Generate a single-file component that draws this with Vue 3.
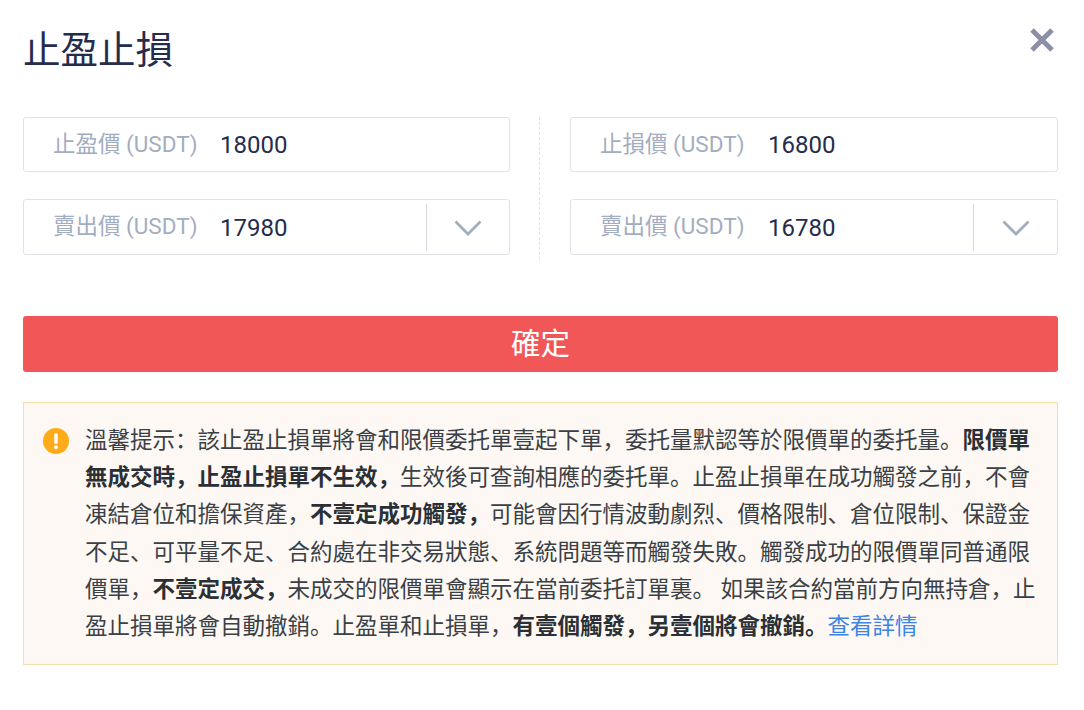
<script setup>
const columns = [
  { top: '止盈價 (USDT)', topValue: '18000', bottom: '賣出價 (USDT)', bottomValue: '17980' },
  { top: '止損價 (USDT)', topValue: '16800', bottom: '賣出價 (USDT)', bottomValue: '16780' }
]
</script>

<template>
  <div class="dialog">
    <header class="head">
      <h1 class="title">止盈止損</h1>
      <svg class="close" width="26" height="26" viewBox="0 0 26 26" aria-hidden="true">
        <path d="M3 3 L23 23 M23 3 L3 23" fill="none" stroke="#8b90a6" stroke-width="5" />
      </svg>
    </header>

    <div class="form">
      <template v-for="(col, i) in columns" :key="i">
        <div v-if="i === 1" class="divider"></div>
        <div class="col">
          <div class="field first">
            <span class="label">{{ col.top }}</span>
            <span class="value">{{ col.topValue }}</span>
          </div>
          <div class="field second">
            <span class="label">{{ col.bottom }}</span>
            <span class="value">{{ col.bottomValue }}</span>
            <span class="select">
              <svg width="28" height="18" viewBox="0 0 28 18" aria-hidden="true">
                <path d="M1.5 2.5 L14 15 L26.500 2.500" fill="none" stroke="#a3adc0" stroke-width="2.800" />
              </svg>
            </span>
          </div>
        </div>
      </template>
    </div>

    <button class="confirm" type="button">確定</button>

    <div class="notice">
      <svg class="warn" width="26" height="26" viewBox="0 0 26 26" aria-hidden="true">
        <circle cx="13" cy="13" r="13" fill="#fdab19" />
        <rect x="11.300" y="5.500" width="3.400" height="10.500" rx="1" fill="#fff" />
        <rect x="11.300" y="17.500" width="3.400" height="3.400" rx="1" fill="#fff" />
      </svg>
      <p class="text">溫馨提示&#xFF1A;該止盈止損單將會和限價委托單壹起下單&#xFF0C;委托量默認等於限價單的委托量。<b>限價單無成交時&#xFF0C;止盈止損單不生效&#xFF0C;</b>生效後可查詢相應的委托單。止盈止損單在成功觸發之前&#xFF0C;不會凍結倉位和擔保資產&#xFF0C;<b>不壹定成功觸發&#xFF0C;</b>可能會因行情波動劇烈、價格限制、倉位限制、保證金不足、可平量不足、合約處在非交易狀態、系統問題等而觸發失敗。觸發成功的限價單同普通限價單&#xFF0C;<b>不壹定成交&#xFF0C;</b>未成交的限價單會顯示在當前委托訂單裏。 如果該合約當前方向無持倉&#xFF0C;止盈止損單將會自動撤銷。止盈單和止損單&#xFF0C;<b>有壹個觸發&#xFF0C;另壹個將會撤銷。</b><a class="link">查看詳情</a></p>
    </div>
  </div>
</template>

<style>
html, body { margin: 0; background: #fff; }
</style>

<style scoped>
.dialog {
  box-sizing: border-box;
  width: 1084px;
  height: 710px;
  padding: 0 26px 0 23px;
  font-family: Roboto, "Noto Sans CJK SC", sans-serif;
  background: #fff;
  overflow: hidden;
}
.head {
  display: flex;
  justify-content: space-between;
  align-items: flex-start;
  height: 117px;
}
.title {
  margin: 27px 0 0;
  font-size: 37.500px;
  line-height: 46px;
  font-weight: 400;
  color: #252c4d;
}
.close { margin: 27px 3px 0 0; }
.form {
  display: grid;
  grid-template-columns: 487px 60px 488px;
}
.col {
  min-width: 0;
  display: flex;
  flex-direction: column;
  gap: 27px;
}
.divider {
  width: 0;
  height: 143px;
  margin-left: 29px;
  border-left: 1px dashed #dfe2e8;
}
.field {
  box-sizing: border-box;
  display: flex;
  align-items: center;
  padding-left: 29px;
  border: 1px solid #e0e2e8;
  border-radius: 3px;
  background: #fff;
}
.first { height: 55px; }
.second { height: 56px; }
.label {
  font-size: 22.500px;
  line-height: 30px;
  color: #a3adc0;
  width: 167px;
  flex: none;
  white-space: nowrap;
  margin-top: -2px;
}
.col:last-child .label { width: 168px; }
.value {
  font-size: 24px;
  line-height: 32px;
  color: #252c4d;
}
.second .value { margin-top: 1px; }
.select {
  margin-left: auto;
  align-self: stretch;
  width: 82px;
  margin-top: 4px;
  margin-bottom: 3px;
  border-left: 1px solid #d5d8e0;
  display: flex;
  align-items: center;
  justify-content: center;
}
.col:last-child .select { width: 83px; }
.confirm {
  display: block;
  width: 100%;
  height: 56px;
  margin-top: 56px;
  padding: 0;
  border: 0;
  border-radius: 3px;
  background: #f25757;
  color: #fff;
  font-family: inherit;
  font-size: 29.500px;
  line-height: 54px;
}
.notice {
  box-sizing: border-box;
  display: flex;
  align-items: flex-start;
  gap: 16px;
  height: 263px;
  margin-top: 30px;
  padding: 19px 20px 0 19px;
  background: #fdf8f3;
  border: 1px solid #f5dfa8;
}
.warn { flex: none; margin-top: 6px; }
.text {
  margin: 0;
  flex: 1;
  font-size: 22.500px;
  line-height: 37.200px;
  color: #3a4046;
}
.text b { font-weight: 700; color: #2a3036; }
.link { color: #3c84e6; }
</style>
